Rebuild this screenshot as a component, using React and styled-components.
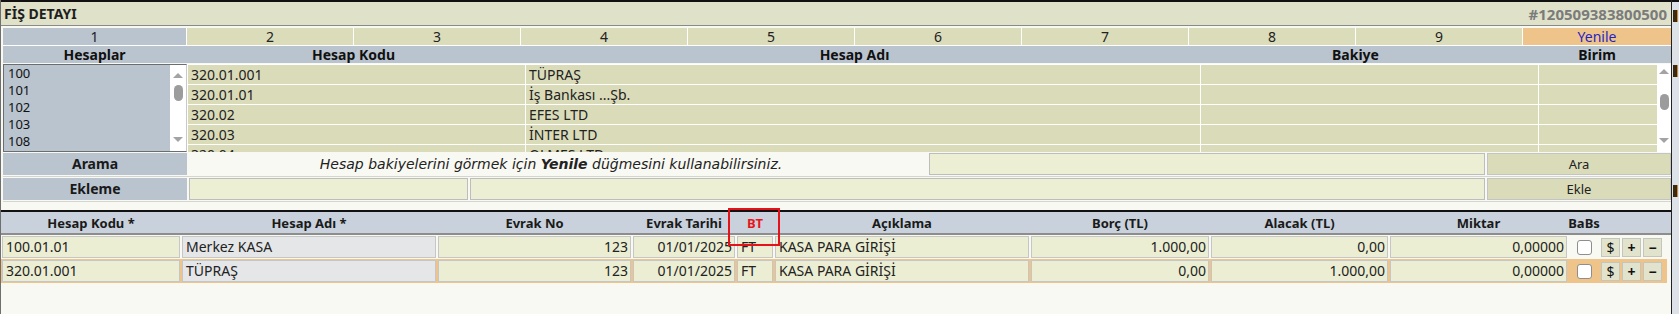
import React from 'react';
import styled, { createGlobalStyle } from 'styled-components';

const GlobalStyle = createGlobalStyle`
  body {
    margin: 0;
    background: #f9f9f3;
    font-family: "Noto Sans", "DejaVu Sans", sans-serif;
    color: #222;
  }
`;

const accounts = [
  ['320.01.001', 'TÜPRAŞ'],
  ['320.01.01', 'İş Bankası ...Şb.'],
  ['320.02', 'EFES LTD'],
  ['320.03', 'İNTER LTD'],
  ['320.04', 'OLMES LTD'],
];

const groups = ['100', '101', '102', '103', '108'];

const entries = [
  ['100.01.01', 'Merkez KASA', '123', '01/01/2025', 'FT', 'KASA PARA GİRİŞİ', '1.000,00', '0,00', '0,00000'],
  ['320.01.001', 'TÜPRAŞ', '123', '01/01/2025', 'FT', 'KASA PARA GİRİŞİ', '0,00', '1.000,00', '0,00000'],
];

const entryAlign = ['left', 'left', 'right', 'right', 'left', 'left', 'right', 'right', 'right'];

export default () => {
  return (
    <Page>
      <GlobalStyle />
      <Panel>
        <TitleBar>
          <Title>FİŞ DETAYI</Title>
          <DocNo>#120509383800500</DocNo>
        </TitleBar>

        <Top>
          <NumberRow>
            {[1, 2, 3, 4, 5, 6, 7, 8, 9].map(n => (
              <NumberCell key={n} first={n === 1}>{n}</NumberCell>
            ))}
            <RefreshCell>Yenile</RefreshCell>
          </NumberRow>

          <HeadRow>
            <HeadCell span={1}>Hesaplar</HeadCell>
            <HeadCell span={2}>Hesap Kodu</HeadCell>
            <HeadCell span={4}>Hesap Adı</HeadCell>
            <HeadCell span={2}>Bakiye</HeadCell>
            <HeadCell span={1}>Birim</HeadCell>
          </HeadRow>

          <BodyArea>
            <ListBox>
              <ListItems>
                {groups.map(g => <ListItem key={g}>{g}</ListItem>)}
              </ListItems>
              <ScrollTrack width={16}>
                <ArrowUp top={8} />
                <Thumb top={7} />
                <Spacer />
                <ArrowDown bottom={9} />
              </ScrollTrack>
            </ListBox>

            <AccountArea>
              <AccountGrid>
                {accounts.map(([code, name]) => (
                  <React.Fragment key={code}>
                    <AccountCell>{code}</AccountCell>
                    <AccountCell>{name}</AccountCell>
                    <AccountCell />
                    <AccountCell />
                  </React.Fragment>
                ))}
              </AccountGrid>
              <ScrollTrack width={14}>
                <ArrowUp top={4} />
                <Thumb top={20} />
                <Spacer />
                <ArrowDown bottom={9} />
              </ScrollTrack>
            </AccountArea>
          </BodyArea>

          <ActionRow cols="184px 1fr 556px 184px">
            <ActionLabel>Arama</ActionLabel>
            <Hint>Hesap bakiyelerini görmek için <b>Yenile</b> düğmesini kullanabilirsiniz.</Hint>
            <Input />
            <ActionButton>Ara</ActionButton>
          </ActionRow>
          <ActionRow cols="184px 279px 1fr 184px">
            <ActionLabel>Ekleme</ActionLabel>
            <Input />
            <Input />
            <ActionButton>Ekle</ActionButton>
          </ActionRow>
        </Top>

        <Entries>
          <EntryHead>
            <ColHead>Hesap Kodu *</ColHead>
            <ColHead>Hesap Adı *</ColHead>
            <ColHead>Evrak No</ColHead>
            <ColHead>Evrak Tarihi</ColHead>
            <ColHead warn>
              BT
              <Marker />
            </ColHead>
            <ColHead>Açıklama</ColHead>
            <ColHead>Borç (TL)</ColHead>
            <ColHead>Alacak (TL)</ColHead>
            <ColHead>Miktar</ColHead>
            <ColHead>BaBs</ColHead>
          </EntryHead>

          {entries.map((row, i) => (
            <EntryRow key={i} active={i === 1}>
              {row.map((v, j) => (
                <Field key={j} align={entryAlign[j]} tone={j === 1 ? 'gray' : 'light'}>{v}</Field>
              ))}
              <CheckCell><Check /></CheckCell>
              <RowButton>$</RowButton>
              <RowButton bold>+</RowButton>
              <RowButton bold>−</RowButton>
            </EntryRow>
          ))}
        </Entries>
      </Panel>

      <SideStrip>
        <Mark top={8} />
        <Mark top={63} />
        <Mark top={183} />
      </SideStrip>
    </Page>
  );
};

const Page = styled.div`
  display: flex;
  width: 1679px;
  min-height: 314px;
  overflow: hidden;
`;

const Panel = styled.div`
  width: 1670px;
  min-height: 314px;
  border-left: 1px solid #6f6f6f;
  border-right: 1px solid #222;
  background: #f9f9f3;
`;

const TitleBar = styled.div`
  height: 23px;
  border-top: 2px solid #111;
  border-bottom: 1px solid #8a8a8a;
  background: #dfe1c9;
  display: flex;
  align-items: center;
  justify-content: space-between;
  padding: 0 4px 0 3px;
`;

const Title = styled.span`
  font-size: 14px;
  font-weight: 700;
  color: #1e1e1e;
`;

const DocNo = styled.span`
  font-size: 15px;
  font-weight: 700;
  color: #7b7b7b;
`;

const Top = styled.div`
  padding: 2px 0 0 2px;
  display: flex;
  flex-direction: column;
`;

const topCols = '183px repeat(8, 166px) 148px';

const NumberRow = styled.div`
  display: grid;
  grid-template-columns: ${topCols};
  column-gap: 1px;
  background: #fff;
  border-bottom: 1px solid #fff;
`;

const NumberCell = styled.div`
  height: 17px;
  line-height: 17px;
  text-align: center;
  font-size: 14px;
  background: ${p => (p.first ? '#b9c4cf' : '#dbdcba')};
`;

const RefreshCell = styled(NumberCell)`
  background: #efc48b;
  color: #2424c4;
`;

const HeadRow = styled.div`
  display: grid;
  grid-template-columns: ${topCols};
  column-gap: 1px;
  background: #b9c4cf;
  height: 17px;
`;

const HeadCell = styled.div`
  grid-column: span ${p => p.span};
  text-align: center;
  font-size: 14px;
  font-weight: 700;
  line-height: 17px;
  color: #111;
`;

const BodyArea = styled.div`
  display: grid;
  grid-template-columns: 184px 1fr;
  height: 88px;
  margin-top: 1px;
  background: #fff;
`;

const ListBox = styled.div`
  display: flex;
  height: 86px;
  border: 1px solid #6d6d6d;
  border-right-color: #c9c9c9;
  background: #b9c4cf;
  overflow: hidden;
`;

const ListItems = styled.div`
  flex: 1;
  padding: 0 0 0 4px;
`;

const ListItem = styled.div`
  font-size: 13px;
  line-height: 17px;
  color: #111;
`;

const ScrollTrack = styled.div`
  width: ${p => p.width}px;
  flex: none;
  background: #fff;
  display: flex;
  flex-direction: column;
  align-items: center;
`;

const ArrowUp = styled.div`
  margin-top: ${p => p.top}px;
  width: 0;
  height: 0;
  border-left: 5px solid transparent;
  border-right: 5px solid transparent;
  border-bottom: 5px solid #a3a3a3;
`;

const ArrowDown = styled.div`
  margin-bottom: ${p => p.bottom}px;
  width: 0;
  height: 0;
  border-left: 5px solid transparent;
  border-right: 5px solid transparent;
  border-top: 5px solid #a3a3a3;
`;

const Thumb = styled.div`
  margin-top: ${p => p.top}px;
  width: 9px;
  height: 16px;
  border-radius: 5px;
  background: #9c9c9c;
`;

const Spacer = styled.div`
  flex: 1;
`;

const AccountArea = styled.div`
  display: flex;
  height: 87px;
  padding-left: 1px;
  margin-top: 1px;
  overflow: hidden;
`;

const AccountGrid = styled.div`
  flex: 1;
  display: grid;
  grid-template-columns: 337px 674px 337px 1fr;
  grid-auto-rows: 19px;
  gap: 1px;
  align-content: start;
  background: #fff;
`;

const AccountCell = styled.div`
  background: #dadbb9;
  font-size: 14px;
  line-height: 19px;
  padding-left: 3px;
  white-space: nowrap;
  overflow: hidden;
`;

const ActionRow = styled.div`
  display: grid;
  grid-template-columns: ${p => p.cols};
  column-gap: 2px;
  height: 22px;
  margin-top: 1px;
  padding-bottom: 1px;
  border-bottom: 1px solid #d4d4d0;
`;

const ActionLabel = styled.div`
  background: #b9c4cf;
  font-size: 14px;
  font-weight: 700;
  text-align: center;
  line-height: 22px;
  color: #1a1a1a;
`;

const Hint = styled.div`
  font-family: "DejaVu Sans", "Noto Sans", sans-serif;
  font-size: 14px;
  font-style: italic;
  text-align: center;
  line-height: 22px;
  white-space: nowrap;
  padding-right: 14px;

  b {
    font-weight: 700;
  }
`;

const Input = styled.div`
  background: #ecefd3;
  border: 1px solid #bdbdbd;
`;

const ActionButton = styled.div`
  background: #dadbb9;
  border: 1px solid #c4c4c4;
  font-size: 13px;
  text-align: center;
  line-height: 20px;
  color: #222;
`;

const Entries = styled.div`
  margin-top: 8px;
  border-top: 2px solid #111;
`;

const entryCols = '178px 254px 193px 102px 36px 254px 178px 177px 177px 30px 19px 19px 19px';

const EntryHead = styled.div`
  display: grid;
  grid-template-columns: ${entryCols};
  column-gap: 2px;
  height: 21px;
  padding-left: 1px;
  background: #c9d2dc;
  border-bottom: 2px solid #8d8d8d;
`;

const ColHead = styled.div`
  position: relative;
  display: flex;
  justify-content: center;
  align-items: center;
  white-space: nowrap;
  font-size: 13px;
  font-weight: 700;
  color: ${p => (p.warn ? '#e8141b' : '#1a1a1a')};
`;

const Marker = styled.div`
  position: absolute;
  left: -9px;
  top: -4px;
  width: 48px;
  height: 34px;
  border: 2px solid #e5121a;
`;

const EntryRow = styled.div`
  display: grid;
  grid-template-columns: ${entryCols};
  column-gap: 2px;
  align-items: center;
  height: 24px;
  padding-left: 1px;
  margin-right: 4px;
  background: ${p => (p.active ? '#eec48a' : 'transparent')};
`;

const Field = styled.div`
  height: 20px;
  line-height: 20px;
  border: 1px solid #c6c6c6;
  background: ${p => (p.tone === 'gray' ? '#e5e6e8' : '#ebeed2')};
  text-align: ${p => p.align};
  padding: 0 ${p => (p.align === 'right' ? '2px' : '3px')};
  font-size: 14px;
  white-space: nowrap;
  overflow: hidden;
`;

const CheckCell = styled.div`
  display: flex;
  justify-content: center;
`;

const Check = styled.div`
  width: 13px;
  height: 13px;
  border: 1px solid #8e8e8e;
  border-radius: 3px;
  background: #fff;
`;

const RowButton = styled.div`
  height: 17px;
  border: 1px solid #c5c5bc;
  background: #e1e3cd;
  text-align: center;
  line-height: 17px;
  font-size: 14px;
  font-weight: ${p => (p.bold ? 700 : 400)};
  color: #111;
`;

const SideStrip = styled.div`
  position: relative;
  flex: 1;
  background: #dde2e9;
  border-top: 2px solid #111;
`;

const Mark = styled.div`
  position: absolute;
  left: 1px;
  top: ${p => p.top}px;
  width: 4px;
  height: 12px;
  background: #3b2a12;
  border-right: 1px solid #c98b3a;
`;
